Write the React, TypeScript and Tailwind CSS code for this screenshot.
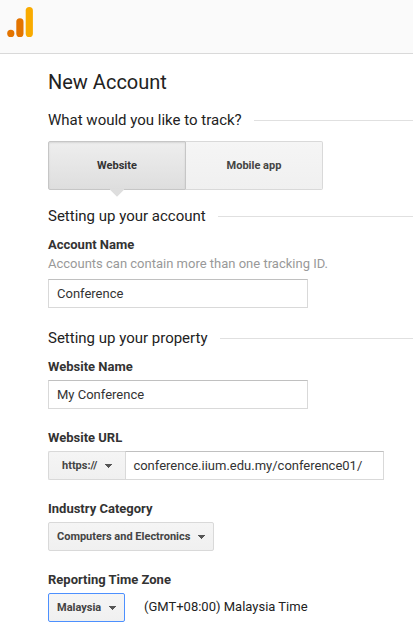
import { useState } from 'react';
import type { ReactNode } from 'react';

const Logo = () => (
  <svg width="28" height="32" viewBox="0 0 28 32">
    <rect x="18.7" y="1" width="7.2" height="30" rx="3.6" fill="#f9ab00" />
    <rect x="9.3" y="12.2" width="7.2" height="18.8" rx="3.6" fill="#e37400" />
    <circle cx="3.8" cy="27.4" r="3.6" fill="#e37400" />
  </svg>
);

const Caret = () => (
  <svg className="shrink-0" width="7" height="4" viewBox="0 0 7 4" shapeRendering="crispEdges">
    <path d="M0 0h7v1H0zM1 1h5v1H1zM2 2h3v1H2zM3 3h1v1H3z" fill="#555" />
  </svg>
);

const SectionTitle = ({ children }: { children: ReactNode }) => (
  <div className="flex h-5 items-center">
    <h2 className="whitespace-nowrap text-[15px] leading-5 text-[#222]">{children}</h2>
    <div className="ml-[12.8px] mt-px h-px flex-1 bg-[#e0e0e0]" />
  </div>
);

const Label = ({ children }: { children: ReactNode }) => (
  <label className="block text-[13px] font-bold leading-5 text-[#333]">{children}</label>
);

const inputClass =
  'block h-[29px] border border-[#d9d9d9] border-t-[#c0c0c0] bg-white text-[13px] text-[#333] outline-none';

const buttonClass =
  'flex h-[29px] items-center border bg-gradient-to-b from-[#f5f5f5] to-[#f0f0f0] pt-px text-[11px] font-bold text-[#444]';

const App = () => {
  const [account, setAccount] = useState('Conference');
  const [website, setWebsite] = useState('My Conference');
  const [url, setUrl] = useState('conference.iium.edu.my/conference01/');

  return (
    <div className="h-[639px] overflow-hidden bg-white font-[Roboto,sans-serif]">
      <header className="h-[54px] border-b border-[#d9d9d9] bg-[#fafafa] pl-[7px] pt-[6px]">
        <Logo />
      </header>

      <main className="pl-12 pt-4">
        <h1 className="text-[20px] leading-6 text-[#222]">New Account</h1>

        <div className="mt-4">
          <SectionTitle>What would you like to track?</SectionTitle>
        </div>
        <div className="mt-[11px] flex h-[49px] w-[275px] text-[11px] font-bold">
          <button className="relative w-[138px] rounded-l-xs border border-[#c6c6c6] bg-gradient-to-b from-[#eee] to-[#dedede] pt-px text-[#333] shadow-[inset_0_1px_2px_rgba(0,0,0,0.1)]">
            Website
            <svg className="absolute left-[61px] top-[47px]" width="14" height="8" viewBox="0 0 14 8">
              <path d="M0 0h14v.8L7 7.8 0 .8z" fill="#dedede" />
            </svg>
          </button>
          <button className="w-[137px] rounded-r-xs border border-l-0 border-[#d9d9d9] bg-gradient-to-b from-[#f5f5f5] to-[#f0f0f0] pt-px text-[#444]">
            Mobile app
          </button>
        </div>

        <div className="mt-4">
          <SectionTitle>Setting up your account</SectionTitle>
        </div>
        <div className="mt-[9px]">
          <Label>Account Name</Label>
          <p className="text-[13px] leading-[18px] text-[#999]">Accounts can contain more than one tracking ID.</p>
          <input
            className={`${inputClass} mt-[6px] w-[260px] px-2`}
            value={account}
            onChange={(e) => setAccount(e.target.value)}
          />
        </div>

        <div className="mt-5">
          <SectionTitle>Setting up your property</SectionTitle>
        </div>
        <div className="mt-[9px]">
          <Label>Website Name</Label>
          <input
            className={`${inputClass} mt-[3px] w-[260px] px-2`}
            value={website}
            onChange={(e) => setWebsite(e.target.value)}
          />
        </div>

        <div className="mt-[19px]">
          <Label>Website URL</Label>
          <div className="mt-[3px] flex">
            <button className={`${buttonClass} w-[77px] justify-between rounded-l-xs border-r-0 border-[#d9d9d9] px-[13px]`}>
              https://
              <Caret />
            </button>
            <input
              className={`${inputClass} w-[259px] px-[7.4px]`}
              value={url}
              onChange={(e) => setUrl(e.target.value)}
            />
          </div>
        </div>

        <div className="mt-[19px]">
          <Label>Industry Category</Label>
          <button className={`${buttonClass} mt-[3px] w-[166px] justify-between rounded-xs border-[#d9d9d9] px-2`}>
            Computers and Electronics
            <Caret />
          </button>
        </div>

        <div className="mt-[19px]">
          <Label>Reporting Time Zone</Label>
          <div className="mt-[3px] flex items-center">
            <button className={`${buttonClass} w-[77px] justify-between rounded-xs border-[#4d90fe] px-2`}>
              Malaysia
              <Caret />
            </button>
            <span className="ml-[19px] pb-0.5 text-[13px] leading-5 text-[#222]">(GMT+08:00) Malaysia Time</span>
          </div>
        </div>
      </main>
    </div>
  );
};

export default App;
